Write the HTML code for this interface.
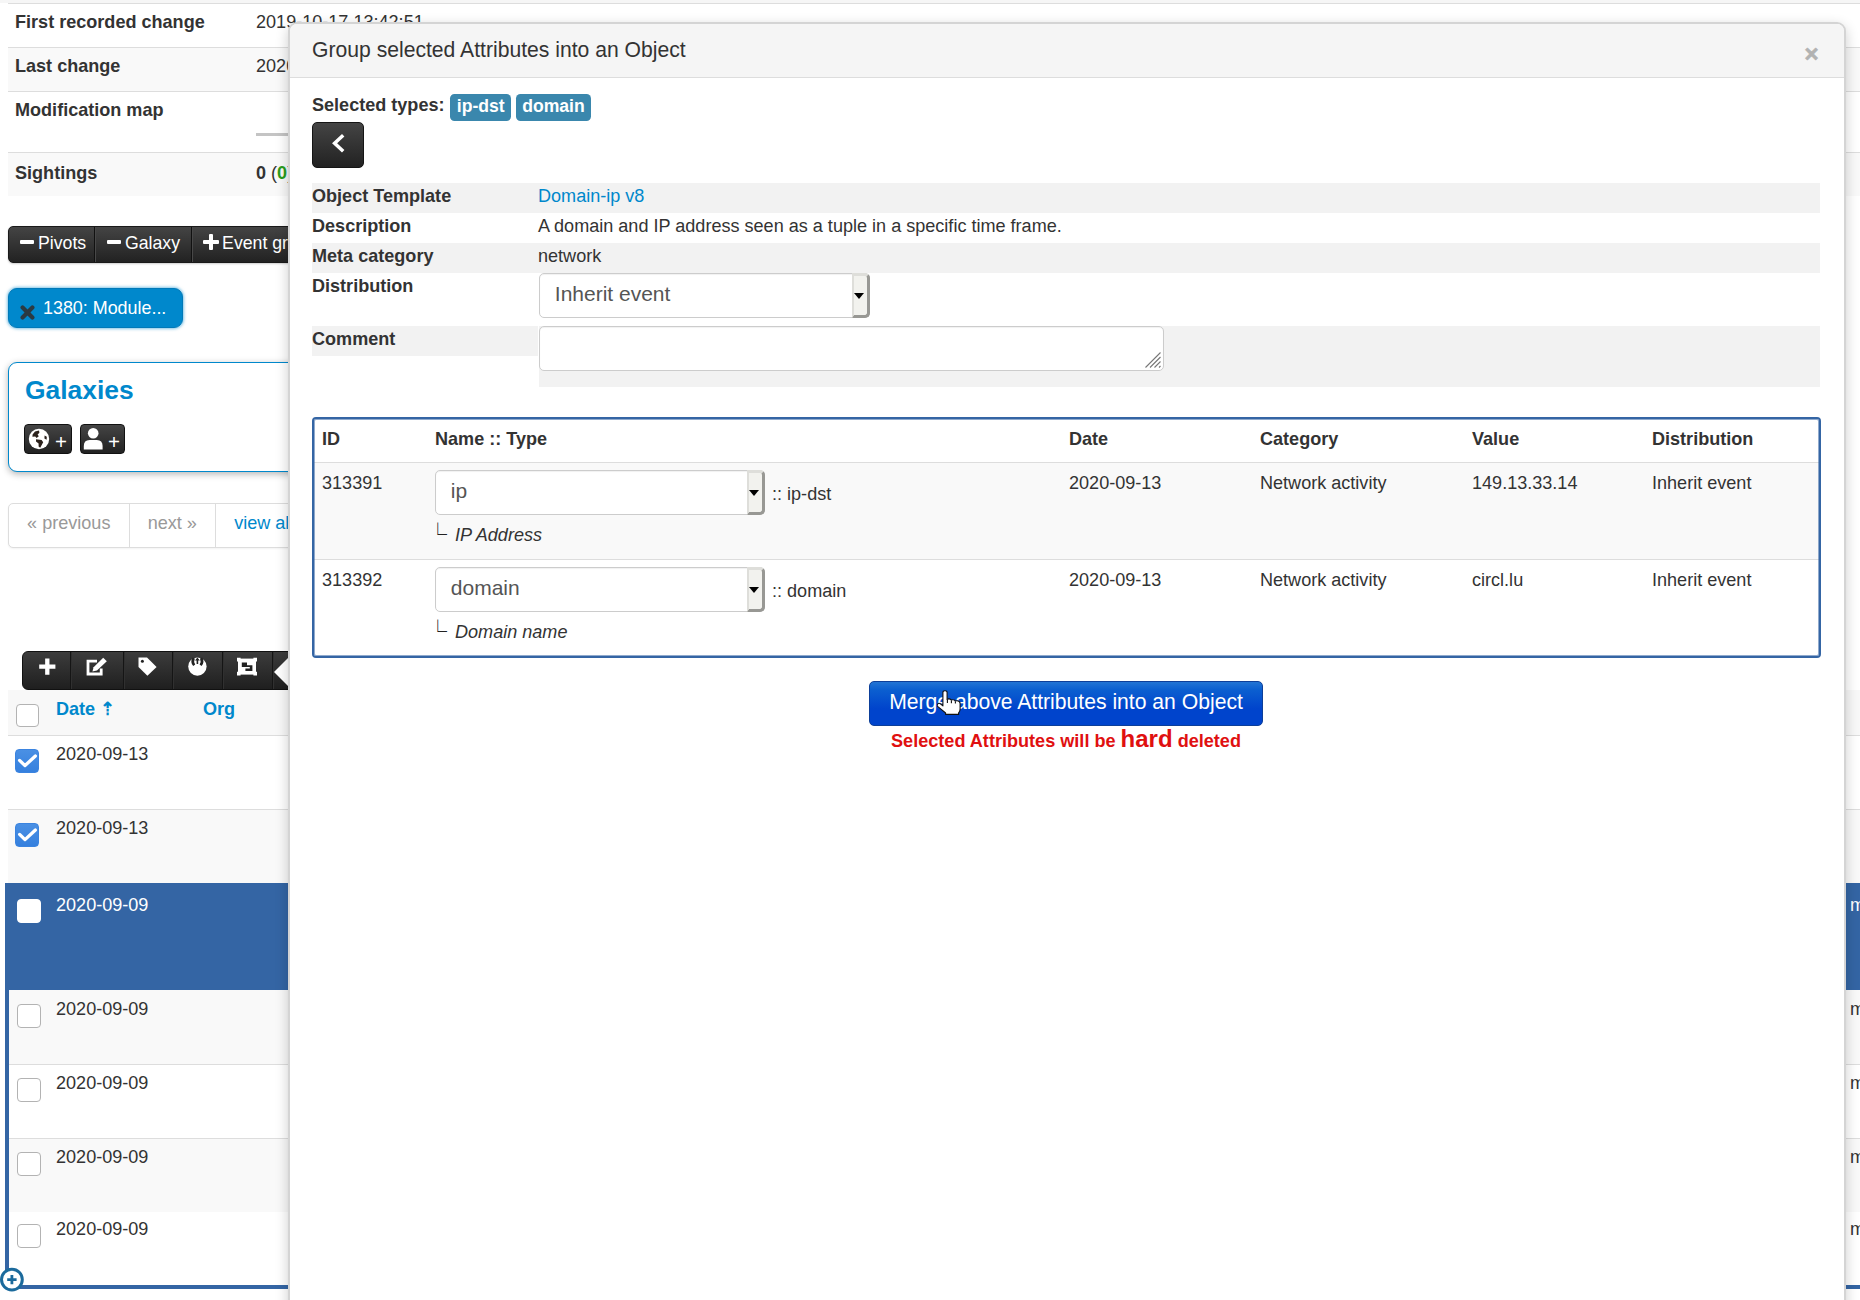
<!DOCTYPE html>
<html lang="en">
<head>
<meta charset="utf-8">
<title>MISP - Group selected Attributes into an Object</title>
<style>
*,*:before,*:after{box-sizing:border-box;}
html,body{margin:0;padding:0;}
body{width:1860px;height:1300px;overflow:hidden;position:relative;background:#fff;font-family:"Liberation Sans",Arial,sans-serif;font-size:18.07px;line-height:26px;color:#333;}
.abs{position:absolute;}
b,.b{font-weight:bold;}
a{color:#0088cc;text-decoration:none;}
/* ---------- background page ---------- */
.meta{position:absolute;left:8px;top:3px;width:1852px;}
.meta .r{position:absolute;left:0;width:1852px;border-top:1px solid #ddd;}
.meta .r .k{position:absolute;left:7px;top:5.2px;font-weight:bold;white-space:nowrap;}
.meta .r .v{position:absolute;left:248px;top:5.2px;white-space:nowrap;}
.odd{background:#f9f9f9;}
.btnbar{position:absolute;left:8px;top:226px;height:37px;border-radius:5px;background:linear-gradient(#444,#222);color:#fff;white-space:nowrap;display:flex;box-shadow:0 1px 2px rgba(0,0,0,.2);border:1px solid #1a1a1a;}
.btnbar span{display:block;height:35px;border-right:1px solid #111;border-left:1px solid #484848;position:relative;}
.btnbar em{font-style:normal;position:absolute;top:2.5px;line-height:26px;font-size:17.7px;}
.btnbar .mi{position:absolute;top:13.3px;width:14px;height:4px;background:#fff;border-radius:1px;}
.pill{position:absolute;left:8px;top:288px;width:175px;height:40px;border-radius:9px;border:1px solid #0079b8;font-size:17.9px;background:#0088cc;color:#fff;box-shadow:0 0 3px 1px rgba(0,136,204,.5);white-space:nowrap;}
.galbox{position:absolute;left:8px;top:362px;width:600px;height:110px;border:1px solid #0088cc;border-radius:9px;box-shadow:0 2px 7px rgba(0,0,0,.3);background:#fff;}
.galbox h4{margin:0;position:absolute;left:16px;top:9px;font-size:26.4px;line-height:36px;color:#0088cc;font-weight:bold;}
.sbtn{position:absolute;top:61px;height:30px;border-radius:4px;background:linear-gradient(#444,#222);border:1px solid #111;color:#fff;}
.sbtn .pl{position:absolute;top:5px;font-size:20.5px;line-height:24px;color:#fff;}
.pager{position:absolute;left:8px;top:503px;height:45px;width:600px;border:1px solid #ddd;border-radius:5px;background:#fff;box-shadow:0 1px 2px rgba(0,0,0,.05);}
.pager span{position:absolute;top:0;height:43px;line-height:39px;border-right:1px solid #ddd;color:#999;text-align:center;white-space:nowrap;}
.tool{position:absolute;left:22px;top:650.5px;width:400px;height:39px;border-radius:6px 0 0 6px;background:linear-gradient(#3c3c3c,#1f1f1f);border:1px solid #111;}
.tool i{position:absolute;top:0;width:1px;height:37px;background:#151515;border-right:1px solid #303030;box-sizing:content-box;}
.tool svg{position:absolute;}
.tool .notch{position:absolute;left:251px;top:4px;width:0;height:0;border:16px solid transparent;border-right:16px solid #fff;border-left:0;}
.atable{position:absolute;left:8px;top:690px;width:1852px;}
.atable .row{position:absolute;left:0;width:1852px;border-top:1px solid #ddd;}
.cb{position:absolute;width:24px;height:24px;border:1.5px solid #b3b3b3;border-radius:4px;background:#fff;}
.cb.on{background:linear-gradient(#4a90e4,#3580de);border-color:#3b84e0;}
.dt{position:absolute;left:48px;white-space:nowrap;}
.mm{position:absolute;left:1842px;white-space:nowrap;}
/* ---------- modal ---------- */
.modal{position:absolute;left:288px;top:22px;width:1558px;height:1400px;background:#fff;border:2px solid #d4d4d4;border-radius:9px 9px 0 0;box-shadow:0 4px 13px rgba(0,0,0,.2);}
.mhead{position:absolute;left:0;top:0;width:1554px;height:54px;background:#f5f5f5;border-bottom:1px solid #ddd;border-radius:7px 7px 0 0;}
.mhead .t{position:absolute;left:22px;top:12px;font-size:21.15px;line-height:28px;white-space:nowrap;color:#333;}
.mhead .x{position:absolute;left:1514.5px;top:15.5px;font-size:24px;line-height:28px;font-weight:bold;color:#b2b2b2;-webkit-text-stroke:0.7px #b2b2b2;}
.lbl{display:inline-block;background:#3a87ad;color:#fff;font-weight:bold;font-size:17.6px;line-height:25px;height:27px;padding:0 6.5px;border-radius:4.5px;position:absolute;white-space:nowrap;}
.dark{background:linear-gradient(#444,#222);border:1px solid #151515;border-radius:5px;}
.orow{position:absolute;left:22px;width:1508px;height:30px;}
.orow .k{position:absolute;left:0;top:0;font-weight:bold;white-space:nowrap;}
.orow .v{position:absolute;left:226px;top:0;white-space:nowrap;}
.g{background:#f2f2f2;}
.sel{position:absolute;height:45px;border:1px solid #ccc;border-radius:5px;background:#fff;font-size:21px;line-height:39.5px;color:#555;padding-left:14.8px;white-space:nowrap;box-shadow:inset 0 1px 1px rgba(0,0,0,.06);}
.sel:after{content:"";position:absolute;right:-1px;top:-1px;width:18px;height:45px;border-left:2px solid #dededa;border-top:3px solid #dededa;border-right:3.5px solid #989894;border-bottom:3.5px solid #989894;border-radius:0 5px 5px 0;background:#f2f2ee;}
.sel:before{content:"";position:absolute;right:4.8px;top:19px;border:5.2px solid transparent;border-top:6px solid #000;border-bottom:0;z-index:2;}
.ta{position:absolute;left:249px;top:302px;width:625px;height:45px;border:1px solid #ccc;border-radius:5px;background:#fff;box-shadow:inset 0 1px 1px rgba(0,0,0,.06);}
.tbl{position:absolute;left:22px;top:393px;width:1509px;height:241px;border:2px solid #3465a4;border-radius:4px;background:#fff;}
.tbl .hr{position:absolute;left:0;width:1505px;}
.tbl .c{position:absolute;white-space:nowrap;}
.tbl .ring{position:absolute;left:0;top:0;right:0;bottom:0;border:1px solid rgba(52,101,164,.55);border-radius:2px;z-index:3;}
.bx{font-family:"Noto Sans CJK SC",sans-serif;font-size:18.5px;line-height:20px;display:inline-block;transform:scaleY(1.25);transform-origin:0 100%;color:#222;}
.merge{position:absolute;left:579px;top:657px;width:394px;height:45px;border-radius:5px;background:linear-gradient(#2274d4 0%,#0b5fd0 18%,#0044cc 62%,#0044cc 100%);border:1px solid #0d3f99;color:#fff;font-size:21.15px;line-height:40px;text-align:center;white-space:nowrap;}
.warn{position:absolute;left:480px;top:699px;width:592px;text-align:center;color:#e01010;font-weight:bold;font-size:18.1px;line-height:32px;white-space:nowrap;}
.warn span{font-size:24px;}
</style>
</head>
<body>

<!-- ================= background page ================= -->
<div class="abs" style="left:0;top:0;width:1860px;height:3px;background:#f6f6f6;"></div>
<div class="meta">
  <div class="r" style="top:0;height:44px;"><span class="k">First recorded change</span><span class="v">2019-10-17 13:42:51</span></div>
  <div class="r odd" style="top:44px;height:44px;"><span class="k">Last change</span><span class="v">2020-09-13 11:27:02</span></div>
  <div class="r" style="top:88px;height:61px;"><span class="k">Modification map</span><span class="abs" style="left:248px;top:40.5px;width:300px;height:3px;background:#c4c4c4;"></span></div>
  <div class="r odd" style="top:149px;height:44px;"><span class="k" style="top:7.3px">Sightings</span><span class="v" style="top:7.3px"><b>0</b> (<b style="color:#2a9d1c">0</b>)</span></div>
</div>

<div class="btnbar">
  <span style="width:86px;border-left:0;border-radius:4px 0 0 4px;"><i class="mi" style="left:11px;"></i><em style="left:29px;">Pivots</em></span>
  <span style="width:96.5px;"><i class="mi" style="left:10.5px;"></i><em style="left:29px;">Galaxy</em></span>
  <span style="width:140px;"><i class="mi" style="left:10px;width:16px;"></i><i class="mi" style="left:16px;top:7.3px;width:4px;height:16px;"></i><em style="left:29.6px;">Event graph</em></span>
</div>

<div class="pill"><svg class="abs" style="left:11px;top:16px;" width="15" height="15" viewBox="0 0 15 15"><path d="M2.6 2.6 L12.4 12.4 M12.4 2.6 L2.6 12.4" stroke="#2b3a42" stroke-width="4.2" stroke-linecap="round"/></svg><span class="abs" style="left:34px;top:5.5px;">1380: Module...</span></div>

<div class="galbox">
  <h4>Galaxies</h4>
  <div class="sbtn" style="left:15px;width:48px;">
    <svg class="abs" style="left:3px;top:3px;" width="22" height="22" viewBox="0 0 22 22"><circle cx="11" cy="11" r="10.2" fill="#fff"/><path d="M4.6 6.4 L7 3.6 L11 2.4 L11.4 4.8 L9.6 6.4 L10.8 8.2 L8.6 10 L7.2 8.6 L4.4 8.8 Z M8 11.2 L13.6 12 L15.2 14.2 L12.2 19.8 L10.6 18.4 L10.6 15.4 L8 13.6 Z M16.6 7.6 L18.8 8.8 L18.6 11.8 L16.4 10.6 Z" fill="#2b211c"/></svg>
    <span class="pl" style="left:30px;">+</span>
  </div>
  <div class="sbtn" style="left:71px;width:45px;">
    <svg class="abs" style="left:2px;top:1px;" width="22" height="24" viewBox="0 0 22 24"><circle cx="10.2" cy="7.3" r="5.3" fill="#fff"/><path d="M0.8 23.5 V20 Q0.8 14 6.5 14 H13.8 Q19.6 14 19.6 20 V23.5 Z" fill="#fff"/></svg>
    <span class="pl" style="left:27px;">+</span>
  </div>
</div>

<div class="pager">
  <span style="left:0;width:120.5px;">&laquo; previous</span>
  <span style="left:120.5px;width:86.5px;">next &raquo;</span>
  <span style="left:207px;width:96.5px;color:#0088cc;">view all</span>
</div>

<div class="tool">
  <i style="left:47px"></i><i style="left:100px"></i><i style="left:149px"></i><i style="left:199px"></i><i style="left:249px"></i>
  <svg style="left:-1px;top:-1.4px;" width="270" height="39" viewBox="22 650 270 39">
    <path d="M39.2 666.6 H55.4 M47.3 658.5 V674.7" stroke="#fff" stroke-width="4.3"/>
    <path d="M97 661.2 H88 V674 H101.2 V668.5" fill="none" stroke="#fff" stroke-width="2.8"/>
    <path d="M92.4 671.4 L93.6 667.2 L103.2 657.8 L106.8 661.2 L97 670.6 Z" fill="#fff"/>
    <path d="M138.5 657.4 H147 L156.6 666.9 L147.4 675.8 L138.5 667 Z" fill="#fff"/><circle cx="142.4" cy="661.3" r="1.5" fill="#222"/>
    <circle cx="197.4" cy="666.6" r="9.2" fill="#fff"/>
    <path d="M192.6 657.6 Q189.8 662.4 193.2 666 L195.2 664.4 Q193.4 661.6 194.8 658.4 Z M202.2 657.6 Q205 662.4 201.6 666 L199.6 664.4 Q201.4 661.6 200 658.4 Z" fill="#222"/>
    <path d="M196.6 660.6 H195 L197.4 657.6 L199.8 660.6 H198.2 V664 H196.6 Z" fill="#222"/>
    <path d="M238 658.6 H256 V674.6 H238 Z" fill="#fff"/>
    <path d="M237 657.8 h3.6 v3.6 h-3.6 Z M253.4 657.8 h3.6 v3.6 h-3.6 Z M237 671.8 h3.6 v3.6 h-3.6 Z M253.4 671.8 h3.6 v3.6 h-3.6 Z" fill="#fff"/>
    <path d="M241.8 662.4 H247 V667 H241.8 Z M247 665.2 H252.4 V671 H245.4 V668.6 H249.8 V667 H247 Z" fill="#222"/>
  </svg>
  <b class="notch"></b>
</div>

<div class="atable">
  <div class="row" style="top:0;height:46px;border-top:0;background:#f8f8f8;">
    <span class="cb" style="left:7.5px;top:13.5px;width:23.5px;height:23.5px;"></span>
    <span class="dt b" style="top:6px;color:#0088cc;">Date &#8673;</span>
    <span class="dt b" style="top:6px;left:195px;color:#0088cc;">Org</span>
  </div>
  <div class="row" style="top:45px;height:74px;"><span class="cb on" style="left:7px;top:12.7px;"><svg width="24" height="24" viewBox="0 0 24 24" style="position:absolute;left:-1.5px;top:-1.5px;"><path d="M4.6 12.4 L10 17.6 L20.4 8" fill="none" stroke="#fff" stroke-width="3.3" stroke-linecap="round" stroke-linejoin="round"/></svg></span><span class="dt" style="top:5px;">2020-09-13</span></div>
  <div class="row odd" style="top:119px;height:74px;"><span class="cb on" style="left:7px;top:12.7px;"><svg width="24" height="24" viewBox="0 0 24 24" style="position:absolute;left:-1.5px;top:-1.5px;"><path d="M4.6 12.4 L10 17.6 L20.4 8" fill="none" stroke="#fff" stroke-width="3.3" stroke-linecap="round" stroke-linejoin="round"/></svg></span><span class="dt" style="top:5px;">2020-09-13</span></div>
</div>
<div class="abs" style="left:5px;top:883px;width:1855px;height:406px;border-left:4px solid #3465a4;border-bottom:4.5px solid #3465a4;"></div>
<div class="abs" style="left:5px;top:883px;width:1855px;height:107px;background:#3465a4;color:#fff;"><span class="cb" style="left:11.8px;top:16px;border-color:#fff;"></span><span class="dt" style="left:51px;top:8.5px;">2020-09-09</span><span class="mm" style="left:1845px;top:9px;">m</span></div>
<div class="abs odd" style="left:9px;top:990px;width:1851px;height:75px;border-bottom:1px solid #ddd;"><span class="cb" style="left:7.8px;top:14px;"></span><span class="dt" style="left:47px;top:5.6px;">2020-09-09</span><span class="mm" style="left:1841px;top:6px;">m</span></div>
<div class="abs" style="left:9px;top:1065px;width:1851px;height:74px;border-bottom:1px solid #ddd;"><span class="cb" style="left:7.8px;top:12.7px;"></span><span class="dt" style="left:47px;top:4.6px;">2020-09-09</span><span class="mm" style="left:1841px;top:5px;">m</span></div>
<div class="abs odd" style="left:9px;top:1139px;width:1851px;height:73px;"><span class="cb" style="left:7.8px;top:12.7px;"></span><span class="dt" style="left:47px;top:4.6px;">2020-09-09</span><span class="mm" style="left:1841px;top:5px;">m</span></div>
<div class="abs" style="left:9px;top:1212px;width:1851px;height:73px;"><span class="cb" style="left:7.8px;top:12.3px;"></span><span class="dt" style="left:47px;top:3.6px;">2020-09-09</span><span class="mm" style="left:1841px;top:4px;">m</span></div>
<svg class="abs" style="left:0;top:1267px;" width="25" height="25" viewBox="0 0 25 25"><circle cx="11.9" cy="12.6" r="10.4" fill="#fff" stroke="#1b6a9c" stroke-width="3"/><path d="M7.2 12.6 H16.6 M11.9 7.9 V17.3" stroke="#1b6a9c" stroke-width="2.8"/></svg>

<!-- ================= modal ================= -->
<div class="modal">
  <div class="mhead"><span class="t">Group selected Attributes into an Object</span><span class="x">&times;</span></div>

  <span class="abs b" style="left:22px;top:68px;white-space:nowrap;">Selected types:</span>
  <span class="lbl" style="left:160px;top:70px;padding:0 6.8px;">ip-dst</span>
  <span class="lbl" style="left:225.6px;top:70px;padding:0 6.6px;">domain</span>
  <div class="abs dark" style="left:22px;top:98px;width:52px;height:46px;"><svg width="52" height="46" viewBox="0 0 52 46" style="position:absolute;left:0;top:-1px;"><path d="M30.2 13.2 L21.6 21.2 L30.2 29.2" fill="none" stroke="#fff" stroke-width="3.5" stroke-linejoin="miter"/></svg></div>

  <div class="orow g" style="top:159px;"><span class="k">Object Template</span><span class="v"><a>Domain-ip v8</a></span></div>
  <div class="orow" style="top:189px;"><span class="k">Description</span><span class="v">A domain and IP address seen as a tuple in a specific time frame.</span></div>
  <div class="orow g" style="top:219px;"><span class="k">Meta category</span><span class="v">network</span></div>
  <div class="orow" style="top:249px;height:53px;"><span class="k">Distribution</span></div>
  <div class="sel" style="left:249px;top:249px;width:331px;">Inherit event</div>
  <div class="orow g" style="top:302px;height:30px;width:226px;"><span class="k">Comment</span></div>
  <div class="abs g" style="left:249px;top:302px;width:1281px;height:60.5px;"></div>
  <div class="ta"><svg width="18" height="18" viewBox="0 0 18 18" style="position:absolute;right:1px;bottom:1px;"><path d="M1.5 16.5 L16.5 1.5 M6 16.5 L16.5 6 M10.5 16.5 L16.5 10.5 M15 16.5 L16.5 15" stroke="#777" stroke-width="1.1" fill="none"/></svg></div>

  <div class="tbl">
    <div class="ring"></div>
    <div class="hr" style="top:0;height:44px;border-bottom:1px solid #ddd;"></div>
    <div class="hr" style="top:44px;height:97px;background:#f9f9f9;border-bottom:1px solid #ddd;"></div>
    <span class="c b" style="left:8px;top:7px;">ID</span>
    <span class="c b" style="left:121px;top:7px;">Name :: Type</span>
    <span class="c b" style="left:755px;top:7px;">Date</span>
    <span class="c b" style="left:946px;top:7px;">Category</span>
    <span class="c b" style="left:1158px;top:7px;">Value</span>
    <span class="c b" style="left:1338px;top:7px;">Distribution</span>

    <span class="c" style="left:8px;top:51px;">313391</span>
    <div class="sel" style="left:121px;top:50.5px;width:330px;">ip</div>
    <span class="c" style="left:458px;top:62px;">:: ip-dst</span>
    <span class="c bx" style="left:114.5px;top:106px;">&#9492;</span>
    <span class="c" style="left:141px;top:103px;font-style:italic;">IP Address</span>
    <span class="c" style="left:755px;top:51px;">2020-09-13</span>
    <span class="c" style="left:946px;top:51px;">Network activity</span>
    <span class="c" style="left:1158px;top:51px;">149.13.33.14</span>
    <span class="c" style="left:1338px;top:51px;">Inherit event</span>

    <span class="c" style="left:8px;top:147.5px;">313392</span>
    <div class="sel" style="left:121px;top:147.5px;width:330px;">domain</div>
    <span class="c" style="left:458px;top:159px;">:: domain</span>
    <span class="c bx" style="left:114.5px;top:203px;">&#9492;</span>
    <span class="c" style="left:141px;top:200px;font-style:italic;">Domain name</span>
    <span class="c" style="left:755px;top:147.5px;">2020-09-13</span>
    <span class="c" style="left:946px;top:147.5px;">Network activity</span>
    <span class="c" style="left:1158px;top:147.5px;">circl.lu</span>
    <span class="c" style="left:1338px;top:147.5px;">Inherit event</span>
  </div>

  <div class="merge">Merge above Attributes into an Object</div>
  <svg class="abs" style="left:647px;top:666px;" width="26" height="27" viewBox="0 0 26 27"><path d="M5.9 2.4 Q5.9 0.7 8 0.7 Q10.1 0.7 10.1 2.4 V9.4 Q10.8 8.8 12.2 8.9 Q13.8 9 14.2 10.2 Q14.9 9.6 16.2 9.8 Q17.8 10 18.2 11.2 Q18.9 10.6 20.2 10.8 Q23.1 11.2 23.1 13.6 V19 Q23.1 21.4 21.6 23 V24.4 H8.6 V23 L0.6 16.4 Q-0.4 15 0.8 13.8 Q2 12.8 3.4 13.8 L5.9 15.8 Z" fill="#fff" stroke="#111" stroke-width="1.1" stroke-linejoin="round"/><path d="M10.4 9.6 V13 M14.4 10.4 V13.2 M18.4 11.4 V13.6" stroke="#111" stroke-width="1.1"/></svg>
  <div class="warn">Selected Attributes will be <span>hard</span> deleted</div>
</div>

</body>
</html>
